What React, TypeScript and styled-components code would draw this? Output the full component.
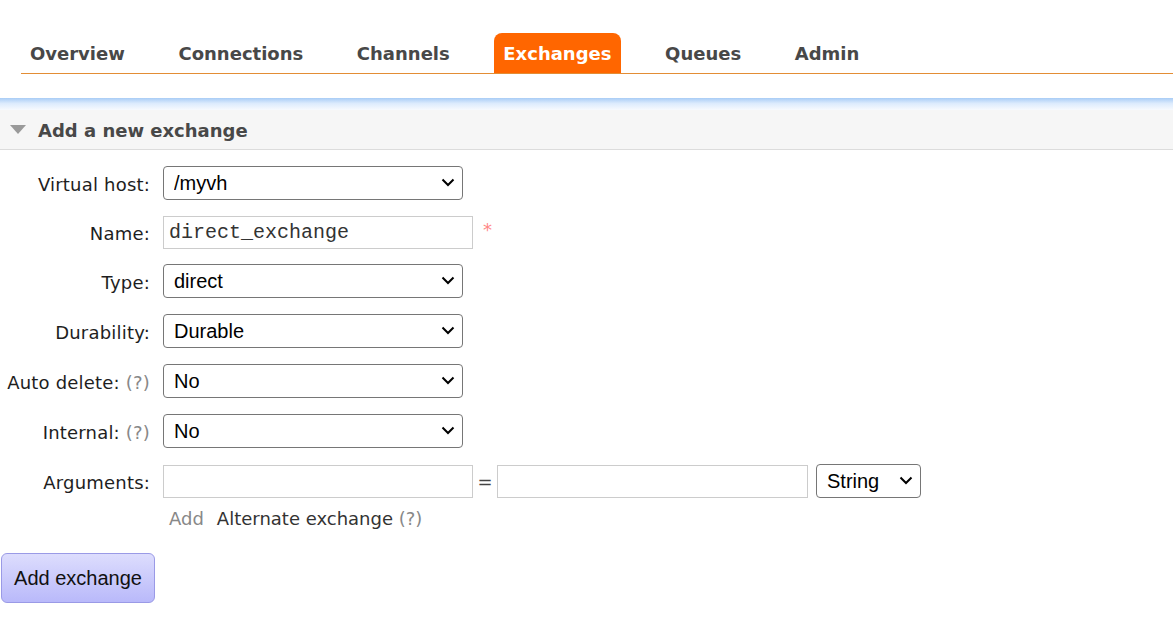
import React from "react";
import styled, { createGlobalStyle } from "styled-components";

const GlobalStyle = createGlobalStyle`
  html, body { margin: 0; padding: 0; background: #fff; }
  body { font-family: "DejaVu Sans", Verdana, sans-serif; font-size: 18px; color: #222; }
  * { box-sizing: border-box; }
`;

const Page = styled.div`
  width: 1173px;
  min-height: 623px;
  background: #fff;
`;

const Menu = styled.nav`
  padding: 33px 0 0 21px;
`;

const TabList = styled.ul`
  list-style: none;
  margin: 0;
  padding: 0;
  display: flex;
  gap: 35.6px;
  border-bottom: 1px solid #e38d35;
`;

const Tab = styled.li<{ $active?: boolean }>`
  height: 40px;
  padding: 0 9px;
  display: flex;
  align-items: center;
  font-weight: bold;
  font-size: 18px;
  color: ${(p) => (p.$active ? "#fff" : "#484848")};
  background: ${(p) => (p.$active ? "#ff6600" : "transparent")};
  border-radius: 8px 8px 0 0;
  white-space: nowrap;
`;

const Spacer = styled.div`
  height: 24px;
`;

const Glow = styled.div`
  height: 12px;
  background: linear-gradient(#a9cdf6 0%, #dcebfd 45%, #f7fafe 100%);
`;

const SectionHeader = styled.h2`
  margin: 0;
  height: 40px;
  background: #f6f6f6;
  border-bottom: 1px solid #dcdcdc;
  display: flex;
  align-items: center;
  gap: 12px;
  padding: 1px 0 0 10px;
  font-size: 18px;
  font-weight: bold;
  color: #484848;
`;

const Form = styled.div`
  display: grid;
  grid-template-columns: 150px auto;
  column-gap: 13px;
  row-gap: 16px;
  padding-top: 16px;
  align-items: center;
  justify-items: start;
`;

const Label = styled.label`
  justify-self: end;
  padding-top: 3px;
  font-size: 18px;
  letter-spacing: 0.2px;
  color: #1e1e1e;
  white-space: nowrap;
`;

const Help = styled.span`
  color: #888;
`;

const SelectWrap = styled.div<{ $w: number }>`
  position: relative;
  width: ${(p) => p.$w}px;
  height: 34px;
`;

const Select = styled.select`
  appearance: none;
  width: 100%;
  height: 100%;
  border: 1px solid #767676;
  border-radius: 4px;
  background: #fff;
  font-family: "Liberation Sans", Arial, sans-serif;
  font-size: 20px;
  color: #000;
  padding: 0 0 0 10px;
  margin: 0;
  outline: none;
`;

const Chevron = styled.svg`
  position: absolute;
  right: 8px;
  top: 12px;
  pointer-events: none;
`;

const TextInput = styled.input<{ $mono?: boolean; $w?: number }>`
  width: ${(p) => p.$w ?? 310}px;
  height: 33px;
  border: 1px solid #cccccc;
  background: #fff;
  padding: 0 5px;
  margin: 0;
  font-family: ${(p) => (p.$mono ? '"Liberation Mono", "Courier New", monospace' : '"Liberation Sans", Arial, sans-serif')};
  font-size: 20px;
  color: #333;
  outline: none;
`;

const FieldRow = styled.div<{ $tight?: boolean }>`
  display: flex;
  align-items: center;
  margin-bottom: ${(p) => (p.$tight ? "-1px" : "0")};
`;

const Required = styled.span`
  color: #f88;
  font-size: 18px;
  margin-left: 10px;
  margin-top: -6px;
`;

const Equals = styled.span`
  width: 24px;
  text-align: center;
  color: #444;
  font-size: 18px;
`;

const ArgSelect = styled.div`
  margin-left: 8px;
`;

const Links = styled.div`
  grid-column: 2;
  display: flex;
  gap: 13px;
  padding-left: 6px;
  margin-top: -6px;
  font-size: 18px;
  color: #333;
`;

const AddLink = styled.span`
  color: #888;
`;

const ButtonRow = styled.div`
  padding: 24px 0 0 1px;
`;

const Button = styled.button`
  width: 154px;
  height: 50px;
  border: 1px solid #9a9ae6;
  border-radius: 6px;
  background: linear-gradient(#ddddfd, #b9b9fa);
  font-family: "Liberation Sans", Arial, sans-serif;
  font-size: 20px;
  color: #111;
  padding: 0;
  cursor: pointer;
`;

const Triangle = () => (
  <svg width="16" height="10" viewBox="0 0 16 10">
    <polygon points="0,0 16,0 8,9" fill="#9a9a9a" />
  </svg>
);

const ChevronIcon = () => (
  <Chevron width="14" height="9" viewBox="0 0 14 9">
    <polyline points="1.5,1.5 7,7 12.5,1.5" fill="none" stroke="#000" strokeWidth="2" />
  </Chevron>
);

const Dropdown = ({ value, options, w = 300 }: { value: string; options: string[]; w?: number }) => (
  <SelectWrap $w={w}>
    <Select defaultValue={value}>
      {options.map((o) => (
        <option key={o}>{o}</option>
      ))}
    </Select>
    <ChevronIcon />
  </SelectWrap>
);

const tabs = ["Overview", "Connections", "Channels", "Exchanges", "Queues", "Admin"];

export default function App() {
  return (
    <Page>
      <GlobalStyle />
      <Menu>
        <TabList>
          {tabs.map((t) => (
            <Tab key={t} $active={t === "Exchanges"}>
              {t}
            </Tab>
          ))}
        </TabList>
      </Menu>
      <Spacer />
      <Glow />
      <SectionHeader>
        <Triangle />
        Add a new exchange
      </SectionHeader>
      <Form>
        <Label>Virtual host:</Label>
        <Dropdown value="/myvh" options={["/", "/myvh"]} />

        <Label>Name:</Label>
        <FieldRow $tight>
          <TextInput $mono defaultValue="direct_exchange" />
          <Required>*</Required>
        </FieldRow>

        <Label>Type:</Label>
        <Dropdown value="direct" options={["direct", "fanout", "headers", "topic"]} />

        <Label>Durability:</Label>
        <Dropdown value="Durable" options={["Durable", "Transient"]} />

        <Label>
          Auto delete: <Help>(?)</Help>
        </Label>
        <Dropdown value="No" options={["No", "Yes"]} />

        <Label>
          Internal: <Help>(?)</Help>
        </Label>
        <Dropdown value="No" options={["No", "Yes"]} />

        <Label>Arguments:</Label>
        <FieldRow>
          <TextInput />
          <Equals>=</Equals>
          <TextInput $w={311} />
          <ArgSelect>
            <Dropdown value="String" options={["String", "Number", "Boolean", "List"]} w={105} />
          </ArgSelect>
        </FieldRow>

        <Links>
          <AddLink>Add</AddLink>
          <span>
            Alternate exchange <Help>(?)</Help>
          </span>
        </Links>
      </Form>
      <ButtonRow>
        <Button>Add exchange</Button>
      </ButtonRow>
    </Page>
  );
}
